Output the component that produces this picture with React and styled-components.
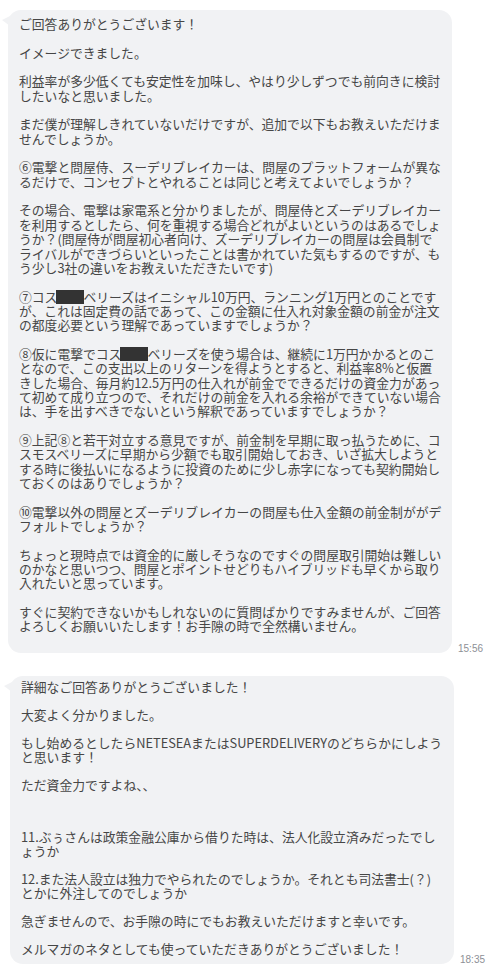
import React from "react";
import styled, { createGlobalStyle } from "styled-components";

const GlobalStyle = createGlobalStyle`
  html, body {
    margin: 0;
    padding: 0;
    background: #ffffff;
  }
  body {
    font-family: "Noto Sans CJK JP", "Noto Sans", sans-serif;
  }
`;

const MASK = "■";

const firstMessage = [
  ["ご回答ありがとうございます！"],
  ["イメージできました。"],
  [
    "利益率が多少低くても安定性を加味し、やはり少しずつでも前向きに検討",
    "したいなと思いました。",
  ],
  [
    "まだ僕が理解しきれていないだけですが、追加で以下もお教えいただけま",
    "せんでしょうか。",
  ],
  [
    "⑥電撃と問屋侍、スーデリブレイカーは、問屋のプラットフォームが異な",
    "るだけで、コンセプトとやれることは同じと考えてよいでしょうか？",
  ],
  [
    "その場合、電撃は家電系と分かりましたが、問屋侍とズーデリブレイカー",
    "を利用するとしたら、何を重視する場合どれがよいというのはあるでしょ",
    "うか？(問屋侍が問屋初心者向け、ズーデリブレイカーの問屋は会員制で",
    "ライバルができづらいといったことは書かれていた気もするのですが、も",
    "う少し3社の違いをお教えいただきたいです)",
  ],
  [
    `⑦コス${MASK}ベリーズはイニシャル10万円、ランニング1万円とのことです`,
    "が、これは固定費の話であって、この金額に仕入れ対象金額の前金が注文",
    "の都度必要という理解であっていますでしょうか？",
  ],
  [
    `⑧仮に電撃でコス${MASK}ベリーズを使う場合は、継続に1万円かかるとのこ`,
    "となので、この支出以上のリターンを得ようとすると、利益率8%と仮置",
    "きした場合、毎月約12.5万円の仕入れが前金でできるだけの資金力があっ",
    "て初めて成り立つので、それだけの前金を入れる余裕ができていない場合",
    "は、手を出すべきでないという解釈であっていますでしょうか？",
  ],
  [
    "⑨上記⑧と若干対立する意見ですが、前金制を早期に取っ払うために、コ",
    "スモスベリーズに早期から少額でも取引開始しておき、いざ拡大しようと",
    "する時に後払いになるように投資のために少し赤字になっても契約開始し",
    "ておくのはありでしょうか？",
  ],
  [
    "⑩電撃以外の問屋とズーデリブレイカーの問屋も仕入金額の前金制ががデ",
    "フォルトでしょうか？",
  ],
  [
    "ちょっと現時点では資金的に厳しそうなのですぐの問屋取引開始は難しい",
    "のかなと思いつつ、問屋とポイントせどりもハイブリッドも早くから取り",
    "入れたいと思っています。",
  ],
  [
    "すぐに契約できないかもしれないのに質問ばかりですみませんが、ご回答",
    "よろしくお願いいたします！お手隙の時で全然構いません。",
  ],
];

const secondMessage = [
  ["詳細なご回答ありがとうございました！"],
  ["大変よく分かりました。"],
  [
    "もし始めるとしたらNETESEAまたはSUPERDELIVERYのどちらかにしよう",
    "と思います！",
  ],
  ["ただ資金力ですよね、、"],
  [
    "11.ぶぅさんは政策金融公庫から借りた時は、法人化設立済みだったでし",
    "ょうか",
  ],
  [
    "12.また法人設立は独力でやられたのでしょうか。それとも司法書士(？)",
    "とかに外注してのでしょうか",
  ],
  ["急ぎませんので、お手隙の時にでもお教えいただけますと幸いです。"],
  ["メルマガのネタとしても使っていただきありがとうございました！"],
];

function renderLine(text) {
  if (!text.includes(MASK)) return text;
  const [before, after] = text.split(MASK);
  return (
    <>
      {before}
      <Redacted />
      {after}
    </>
  );
}

function Message({ paragraphs, time, offset, lineHeight, padTop, padBottom, gaps = {} }) {
  return (
    <Row $offset={offset}>
      <Bubble $padTop={padTop} $padBottom={padBottom}>
        {paragraphs.map((lines, i) => (
          <Paragraph key={i} $gap={i === 0 ? 0 : lineHeight * (gaps[i] || 1)}>
            {lines.map((line, j) => (
              <Line key={j} $lh={lineHeight}>
                {renderLine(line)}
              </Line>
            ))}
          </Paragraph>
        ))}
      </Bubble>
      <Time>{time}</Time>
    </Row>
  );
}

function App() {
  return (
    <Page>
      <GlobalStyle />
      <Message
        paragraphs={firstMessage}
        time="15:56"
        offset={8}
        lineHeight={14.35}
        padTop={7}
        padBottom={19}
      />
      <Message
        paragraphs={secondMessage}
        time="18:35"
        offset={10}
        lineHeight={14}
        padTop={4}
        padBottom={8}
        gaps={{ 4: 2.7 }}
      />
    </Page>
  );
}

const Page = styled.div`
  width: 502px;
  min-height: 977px;
  background: #ffffff;
  display: flex;
  flex-direction: column;
  gap: 23px;
  padding-top: 10px;
  box-sizing: border-box;
`;

const Row = styled.div`
  display: flex;
  align-items: flex-end;
  gap: 6px;
  padding-left: ${(p) => p.$offset}px;
`;

const Bubble = styled.div`
  position: relative;
  width: 444px;
  box-sizing: border-box;
  background: #f1f2f4;
  border-radius: 13px;
  padding: ${(p) => p.$padTop}px 8px ${(p) => p.$padBottom}px 11px;
  color: #464646;
  font-size: 12.8px;

  &::before {
    content: "";
    position: absolute;
    left: -6px;
    top: 6px;
    width: 0;
    height: 0;
    border-top: 4px solid transparent;
    border-bottom: 6px solid transparent;
    border-right: 8px solid #f1f2f4;
  }
`;

const Paragraph = styled.div`
  margin-top: ${(p) => p.$gap}px;
`;

const Line = styled.div`
  height: ${(p) => p.$lh}px;
  line-height: ${(p) => p.$lh}px;
  white-space: nowrap;
`;

const Redacted = styled.span`
  display: inline-block;
  width: 28px;
  height: 14px;
  margin: 0 -1px;
  vertical-align: -2px;
  background: #333333;
`;

const Time = styled.span`
  font-family: "Liberation Sans", Arial, sans-serif;
  font-size: 10px;
  line-height: 12px;
  color: #8d9096;
  margin-bottom: -2px;
`;

export default App;
